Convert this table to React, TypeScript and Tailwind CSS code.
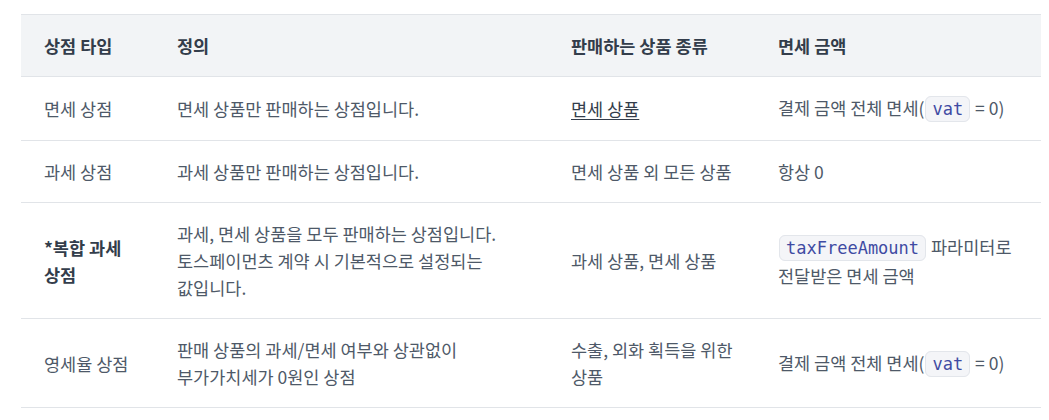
import React from "react";

const Code = ({ children }: { children: React.ReactNode }) => (
  <code className="mx-[1px] rounded-[6px] border border-[#e3e6eb] bg-[#f4f5f8] px-[6px] py-[2px] font-['DejaVu_Sans_Mono',monospace] text-[17px] text-[#3f4ba3]">
    {children}
  </code>
);

const td = "px-[23px] py-[17px] align-middle";
const td3 = "pl-[23px] pr-[12px] py-[17px] align-middle";

export default function App() {
  return (
    <div className="min-h-[420px] bg-white pl-[21px] pr-[8px] pt-[14px] font-['Noto_Sans_CJK_KR','Noto_Sans',sans-serif] text-[17.5px] leading-[27px] text-[#4e5968]">
      <table className="w-[1020px] table-fixed border-collapse break-keep">
        <colgroup>
          <col className="w-[133px]" />
          <col className="w-[394px]" />
          <col className="w-[207px]" />
          <col className="w-[286px]" />
        </colgroup>
        <thead>
          <tr className="border-y border-[#e1e4e8] bg-[#f2f4f6] text-left text-[#333d4b]">
            <th className={td + " font-semibold"}>상점 타입</th>
            <th className={td + " font-semibold"}>정의</th>
            <th className={td3 + " font-semibold"}>판매하는 상품 종류</th>
            <th className={td + " font-semibold"}>면세 금액</th>
          </tr>
        </thead>
        <tbody>
          <tr className="border-b border-[#e1e4e8]">
            <td className={td}>면세 상점</td>
            <td className={td}>면세 상품만 판매하는 상점입니다.</td>
            <td className={td3}>
              <span className="text-[#333d4b] underline underline-offset-[3px]">면세 상품</span>
            </td>
            <td className={td}>
              결제 금액 전체 면세(<Code>vat</Code> = 0)
            </td>
          </tr>
          <tr className="border-b border-[#e1e4e8]">
            <td className={td}>과세 상점</td>
            <td className={td}>과세 상품만 판매하는 상점입니다.</td>
            <td className={td3}>면세 상품 외 모든 상품</td>
            <td className={td}>항상 0</td>
          </tr>
          <tr className="border-b border-[#e1e4e8]">
            <td className={td + " font-bold text-[#333d4b]"}>*복합 과세 상점</td>
            <td className={td}>
              과세, 면세 상품을 모두 판매하는 상점입니다. 토스페이먼츠 계약 시 기본적으로 설정되는 값입니다.
            </td>
            <td className={td3}>과세 상품, 면세 상품</td>
            <td className={td}>
              <Code>taxFreeAmount</Code> 파라미터로 전달받은 면세 금액
            </td>
          </tr>
          <tr className="border-b border-[#e1e4e8]">
            <td className={td}>영세율 상점</td>
            <td className={td}>판매 상품의 과세/면세 여부와 상관없이 부가가치세가 0원인 상점</td>
            <td className={td3}>수출, 외화 획득을 위한 상품</td>
            <td className={td}>
              결제 금액 전체 면세(<Code>vat</Code> = 0)
            </td>
          </tr>
        </tbody>
      </table>
    </div>
  );
}
